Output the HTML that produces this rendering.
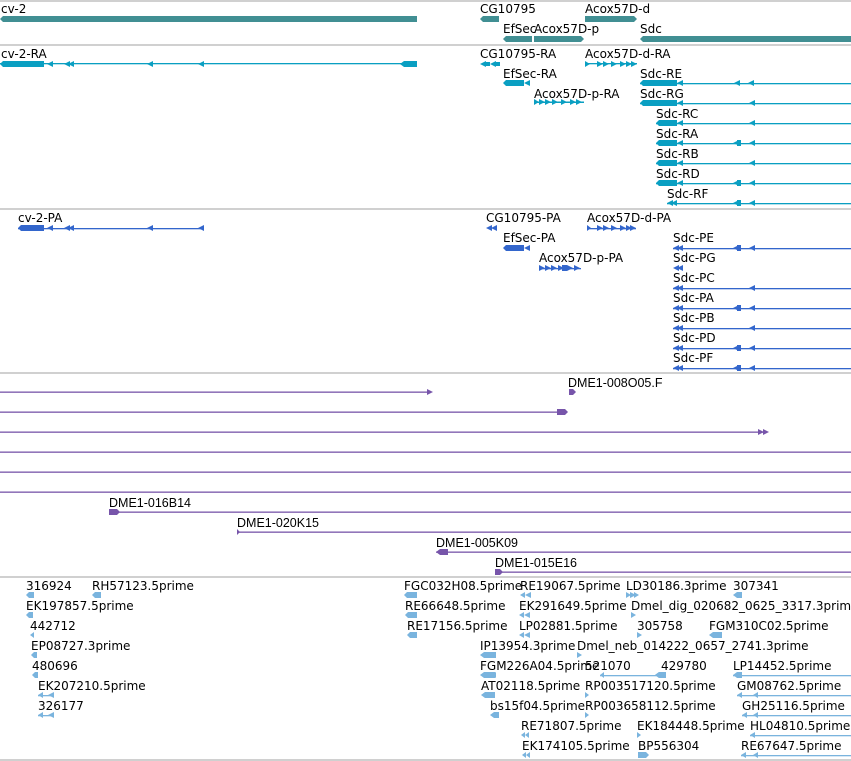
<!DOCTYPE html>
<html><head><meta charset="utf-8"><style>
html,body{margin:0;padding:0;background:#fff;width:851px;height:761px;overflow:hidden}
svg{display:block}
text{font-family:"DejaVu Sans","Liberation Sans",sans-serif;font-size:12px;fill:#000}
.p text{font-family:"Liberation Sans","DejaVu Sans",sans-serif;font-size:12.5px}
</style></head><body>
<svg width="851" height="761" viewBox="0 0 851 761" xmlns="http://www.w3.org/2000/svg">
<g stroke="#c0c0c0" stroke-width="1.5">
<line x1="0" y1="1" x2="851" y2="1"/><line x1="0" y1="45" x2="851" y2="45"/>
<line x1="0" y1="209" x2="851" y2="209"/><line x1="0" y1="373" x2="851" y2="373"/>
<line x1="0" y1="577" x2="851" y2="577"/><line x1="0" y1="760" x2="851" y2="760"/>
</g>
<!-- track 1 -->
<g fill="#418f93">
<polygon points="0,19 3,16 417,16 417,22 3,22"/>
<polygon points="480,19 483,16 499,16 499,22 483,22"/>
<polygon points="585,16 634,16 637,19 634,22 585,22"/>
<polygon points="503,39 506,36 532,36 532,42 506,42"/>
<polygon points="534,36 581,36 584,39 581,42 534,42"/>
<polygon points="640,39 643,36 851,36 851,42 643,42"/>
</g>
<text x="1" y="13">cv-2</text><text x="480" y="13">CG10795</text><text x="585" y="13">Acox57D-d</text>
<text x="503" y="33">EfSec</text><text x="534" y="33">Acox57D-p</text><text x="640" y="33">Sdc</text>
<!-- track 2 -->
<g fill="#0a9fc2" stroke="none">
<rect x="0" y="63" width="417" height="1.3"/>
<polygon points="0,64 3,61 44,61 44,67 3,67"/><polygon points="47,64 53,61 53,67"/><polygon points="64,64 70,61 70,67"/><polygon points="68,64 74,61 74,67"/><polygon points="147,64 153,61 153,67"/><polygon points="198,64 204,61 204,67"/><polygon points="400,64 404,61 417,61 417,67 404,67"/>
<polygon points="480,64 486,61 486,67"/><rect x="484" y="62" width="6" height="4"/><polygon points="490,64 496,61 496,67"/><rect x="494" y="62" width="6" height="4"/>
<rect x="585" y="63" width="52" height="1.3"/><polygon points="585,61 590,64 585,67"/><polygon points="597,61 603,64 597,67"/><polygon points="603,61 609,64 603,67"/><polygon points="611,61 617,64 611,67"/><polygon points="620,61 626,64 620,67"/><polygon points="626,61 632,64 626,67"/><polygon points="631,61 637,64 631,67"/>
<polygon points="503,83 506,80 524,80 524,86 506,86"/><polygon points="524,83 530,80 530,86"/>
<polygon points="534,99 539,102 534,105"/><polygon points="539,99 545,102 539,105"/><polygon points="545,99 551,102 545,105"/><polygon points="552,99 558,102 552,105"/><polygon points="561,99 567,102 561,105"/><polygon points="570,99 576,102 570,105"/><polygon points="576,99 582,102 576,105"/><rect x="534" y="101.5" width="50" height="1.5"/>
</g>
<g fill="#0a9fc2">
<rect x="640" y="83" width="211" height="1.3"/><polygon points="640,83 643,80 677,80 677,86 643,86"/><polygon points="677,83 683,80 683,86"/><polygon points="734,83 740,80 740,86"/><polygon points="748,83 754,80 754,86"/>
<rect x="640" y="103" width="211" height="1.3"/><polygon points="640,103 643,100 677,100 677,106 643,106"/><polygon points="677,103 683,100 683,106"/><polygon points="749,103 755,100 755,106"/>
<rect x="656" y="123" width="195" height="1.3"/><polygon points="656,123 659,120 677,120 677,126 659,126"/><polygon points="677,123 683,120 683,126"/><polygon points="749,123 755,120 755,126"/>
<rect x="656" y="143" width="195" height="1.3"/><polygon points="656,143 659,140 677,140 677,146 659,146"/><polygon points="677,143 683,140 683,146"/><polygon points="733,143 739,140 740,146"/><polygon points="749,143 755,140 755,146"/><rect x="737" y="140" width="4" height="6"/>
<rect x="656" y="163" width="195" height="1.3"/><polygon points="656,163 659,160 677,160 677,166 659,166"/><polygon points="677,163 683,160 683,166"/><polygon points="749,163 755,160 755,166"/>
<rect x="656" y="183" width="195" height="1.3"/><polygon points="656,183 659,180 677,180 677,186 659,186"/><polygon points="677,183 683,180 683,186"/><polygon points="733,183 739,180 739,186"/><rect x="737" y="180" width="4" height="6"/><polygon points="749,183 755,180 755,186"/>
<rect x="667" y="203" width="184" height="1.3"/><polygon points="667,203 673,200 673,206"/><polygon points="671,203 677,200 677,206"/><polygon points="733,203 739,200 739,206"/><rect x="737" y="200" width="4" height="6"/><polygon points="749,203 755,200 755,206"/>
</g>
<text x="1" y="58">cv-2-RA</text><text x="480" y="58">CG10795-RA</text><text x="585" y="58">Acox57D-d-RA</text>
<text x="503" y="78">EfSec-RA</text><text x="640" y="78">Sdc-RE</text>
<text x="534" y="98">Acox57D-p-RA</text><text x="640" y="98">Sdc-RG</text>
<text x="656" y="118">Sdc-RC</text><text x="656" y="138">Sdc-RA</text><text x="656" y="158">Sdc-RB</text><text x="656" y="178">Sdc-RD</text><text x="667" y="198">Sdc-RF</text>
<!-- track 3 -->
<g fill="#3366cc">
<rect x="18" y="228" width="186" height="1.3"/><polygon points="18,228 21,225 44,225 44,231 21,231"/><polygon points="47,228 53,225 53,231"/><polygon points="64,228 70,225 70,231"/><polygon points="68,228 74,225 74,231"/><polygon points="147,228 153,225 153,231"/><polygon points="198,228 204,225 204,231"/>
<polygon points="486,228 492,225 492,231"/><polygon points="491,228 497,225 497,231"/>
<rect x="587" y="228" width="49" height="1.3"/><polygon points="587,225 591,228 587,231"/><polygon points="597,225 603,228 597,231"/><polygon points="603,225 609,228 603,231"/><polygon points="611,225 617,228 611,231"/><polygon points="620,225 626,228 620,231"/><polygon points="626,225 632,228 626,231"/><polygon points="630,225 636,228 630,231"/>
<polygon points="503,248 506,245 524,245 524,251 506,251"/><polygon points="524,248 530,245 530,251"/>
<rect x="539" y="268" width="42" height="1.3"/><polygon points="539,265 545,268 539,271"/><polygon points="545,265 551,268 545,271"/><polygon points="551,265 557,268 551,271"/><polygon points="558,265 564,268 558,271"/><rect x="562" y="265" width="5" height="6"/><polygon points="567,265 573,268 567,271"/><polygon points="574,265 580,268 574,271"/>
</g>
<g fill="#3366cc">
<rect x="673" y="248" width="178" height="1.3"/><polygon points="673,248 679,245 679,251"/><polygon points="677,248 683,245 683,251"/><polygon points="733,248 739,245 739,251"/><rect x="737" y="245" width="4" height="6"/><polygon points="749,248 755,245 755,251"/>
<polygon points="673,268 679,265 679,271"/><polygon points="677,268 683,265 683,271"/>
<rect x="673" y="288" width="178" height="1.3"/><polygon points="673,288 679,285 679,291"/><polygon points="677,288 683,285 683,291"/><polygon points="749,288 755,285 755,291"/>
<rect x="673" y="308" width="178" height="1.3"/><polygon points="673,308 679,305 679,311"/><polygon points="677,308 683,305 683,311"/><polygon points="733,308 739,305 739,311"/><rect x="737" y="305" width="4" height="6"/><polygon points="749,308 755,305 755,311"/>
<rect x="673" y="328" width="178" height="1.3"/><polygon points="673,328 679,325 679,331"/><polygon points="677,328 683,325 683,331"/><polygon points="749,328 755,325 755,331"/>
<rect x="673" y="348" width="178" height="1.3"/><polygon points="673,348 679,345 679,351"/><polygon points="677,348 683,345 683,351"/><polygon points="733,348 739,345 739,351"/><rect x="737" y="345" width="4" height="6"/><polygon points="749,348 755,345 755,351"/>
<rect x="673" y="368" width="178" height="1.3"/><polygon points="673,368 679,365 679,371"/><polygon points="677,368 683,365 683,371"/><polygon points="733,368 739,365 739,371"/><rect x="737" y="365" width="4" height="6"/><polygon points="749,368 755,365 755,371"/>
</g>
<text x="18" y="222">cv-2-PA</text><text x="486" y="222">CG10795-PA</text><text x="587" y="222">Acox57D-d-PA</text>
<text x="503" y="242">EfSec-PA</text><text x="673" y="242">Sdc-PE</text>
<text x="539" y="262">Acox57D-p-PA</text><text x="673" y="262">Sdc-PG</text>
<text x="673" y="282">Sdc-PC</text><text x="673" y="302">Sdc-PA</text><text x="673" y="322">Sdc-PB</text><text x="673" y="342">Sdc-PD</text><text x="673" y="362">Sdc-PF</text>
<!-- track 4 -->
<g fill="#7755aa">
<rect x="0" y="391.5" width="430" height="1.3"/><polygon points="427,389 433,392 427,395"/>
<polygon points="569,389 573,389 576,392 573,395 569,395"/>
<rect x="0" y="411.5" width="565" height="1.3"/><polygon points="557,409 565,409 568,412 565,415 557,415"/>
<rect x="0" y="431.5" width="766" height="1.3"/><polygon points="758,429 764,432 758,435"/><polygon points="763,429 769,432 763,435"/>
<rect x="0" y="451.5" width="851" height="1.3"/><rect x="0" y="471.5" width="851" height="1.3"/><rect x="0" y="491.5" width="851" height="1.3"/>
<rect x="109" y="511.5" width="742" height="1.3"/><polygon points="109,509 117,509 120,512 117,515 109,515"/>
<rect x="237" y="531.5" width="614" height="1.3"/><polygon points="237,529 240,532 237,535"/>
<rect x="436" y="551.5" width="415" height="1.3"/><polygon points="436,552 440,549 448,549 448,555 440,555"/>
<rect x="495" y="571.5" width="356" height="1.3"/><polygon points="495,569 500,569 503,572 500,575 495,575"/>
</g>
<g class="p">
<text x="568" y="387">DME1-008O05.F</text>
<text x="109" y="507">DME1-016B14</text><text x="237" y="527">DME1-020K15</text>
<text x="436" y="547">DME1-005K09</text><text x="495" y="567">DME1-015E16</text>
</g>
<!-- track 5 -->
<g fill="#7ab4de">
<polygon points="26,595 29,592 34,592 34,598 29,598"/><polygon points="92,595 95,592 101,592 101,598 95,598"/>
<polygon points="26,615 29,612 33,612 33,618 29,618"/><polygon points="30,635 34,632 34,638"/><polygon points="31,655 34,652 37,652 37,658 34,658"/><polygon points="32,675 35,672 38,672 38,678 35,678"/>
<rect x="38" y="695" width="16" height="1.3"/><polygon points="38,695 43,692 43,698"/><polygon points="48,695 54,692 54,698"/>
<rect x="38" y="715" width="16" height="1.3"/><polygon points="38,715 43,712 43,718"/><polygon points="48,715 54,712 54,718"/>
<polygon points="404,595 407,592 417,592 417,598 407,598"/><polygon points="405,615 408,612 417,612 417,618 408,618"/><polygon points="407,635 410,632 417,632 417,638 410,638"/>
<polygon points="520,595 525,592 525,598"/><polygon points="525,595 531,592 531,598"/>
<polygon points="626,592 631,595 626,598"/><polygon points="630,592 636,595 630,598"/><polygon points="634,592 639,595 634,598"/>
<polygon points="733,595 737,592 742,592 742,598 737,598"/>
<polygon points="519,615 524,612 524,618"/><polygon points="524,615 530,612 530,618"/><polygon points="631,612 636,615 631,618"/>
<polygon points="519,635 524,632 524,638"/><polygon points="524,635 530,632 530,638"/><polygon points="637,632 642,635 637,638"/><polygon points="709,635 713,632 722,632 722,638 713,638"/>
<polygon points="480,655 484,652 496,652 496,658 484,658"/><polygon points="577,652 582,655 577,658"/>
<polygon points="480,675 484,672 495,672 495,678 484,678"/><polygon points="491,675 496,672 496,678"/>
<rect x="600" y="675" width="60" height="1.3"/><polygon points="600,675 604,672 604,678"/><polygon points="655,675 659,672 666,672 666,678 659,678"/><polygon points="655,675 659,672 659,678"/>
<rect x="733" y="675" width="118" height="1.3"/><polygon points="733,675 737,672 742,672 742,678 737,678"/>
<polygon points="481,695 485,692 495,692 495,698 485,698"/><polygon points="585,692 589,695 585,698"/>
<rect x="737" y="695" width="114" height="1.3"/><polygon points="737,695 742,692 742,698"/><polygon points="753,695 758,692 758,698"/>
<polygon points="490,715 494,712 499,712 499,718 494,718"/><polygon points="585,712 589,715 585,718"/>
<rect x="742" y="715" width="109" height="1.3"/><polygon points="742,715 747,712 747,718"/><polygon points="753,715 758,712 758,718"/>
<polygon points="521,735 525,732 525,738"/><polygon points="525,735 529,732 529,738"/><polygon points="637,732 641,735 637,738"/>
<rect x="750" y="735" width="101" height="1.3"/><polygon points="750,735 755,732 755,738"/>
<polygon points="522,755 526,752 526,758"/><polygon points="526,755 530,752 530,758"/><polygon points="638,752 646,752 649,755 646,758 638,758"/>
<rect x="741" y="755" width="110" height="1.3"/><polygon points="741,755 746,752 746,758"/><polygon points="753,755 758,752 758,758"/>
</g>
<text x="26" y="590">316924</text><text x="92" y="590">RH57123.5prime</text>
<text x="26" y="610">EK197857.5prime</text><text x="30" y="630">442712</text><text x="31" y="650">EP08727.3prime</text>
<text x="32" y="670">480696</text><text x="38" y="690">EK207210.5prime</text><text x="38" y="710">326177</text>
<text x="404" y="590">FGC032H08.5prime</text><text x="520" y="590">RE19067.5prime</text><text x="626" y="590">LD30186.3prime</text><text x="733" y="590">307341</text>
<text x="405" y="610">RE66648.5prime</text><text x="519" y="610">EK291649.5prime</text><text x="631" y="610">Dmel_dig_020682_0625_3317.3prime</text>
<text x="407" y="630">RE17156.5prime</text><text x="519" y="630">LP02881.5prime</text><text x="637" y="630">305758</text><text x="709" y="630">FGM310C02.5prime</text>
<text x="480" y="650">IP13954.3prime</text><text x="577" y="650">Dmel_neb_014222_0657_2741.3prime</text>
<text x="480" y="670">FGM226A04.5prime</text><text x="585" y="670">521070</text><text x="661" y="670">429780</text><text x="733" y="670">LP14452.5prime</text>
<text x="481" y="690">AT02118.5prime</text><text x="585" y="690">RP003517120.5prime</text><text x="737" y="690">GM08762.5prime</text>
<text x="490" y="710">bs15f04.5prime</text><text x="585" y="710">RP003658112.5prime</text><text x="742" y="710">GH25116.5prime</text>
<text x="521" y="730">RE71807.5prime</text><text x="637" y="730">EK184448.5prime</text><text x="750" y="730">HL04810.5prime</text>
<text x="522" y="750">EK174105.5prime</text><text x="638" y="750">BP556304</text><text x="741" y="750">RE67647.5prime</text>
</svg>
</body></html>
